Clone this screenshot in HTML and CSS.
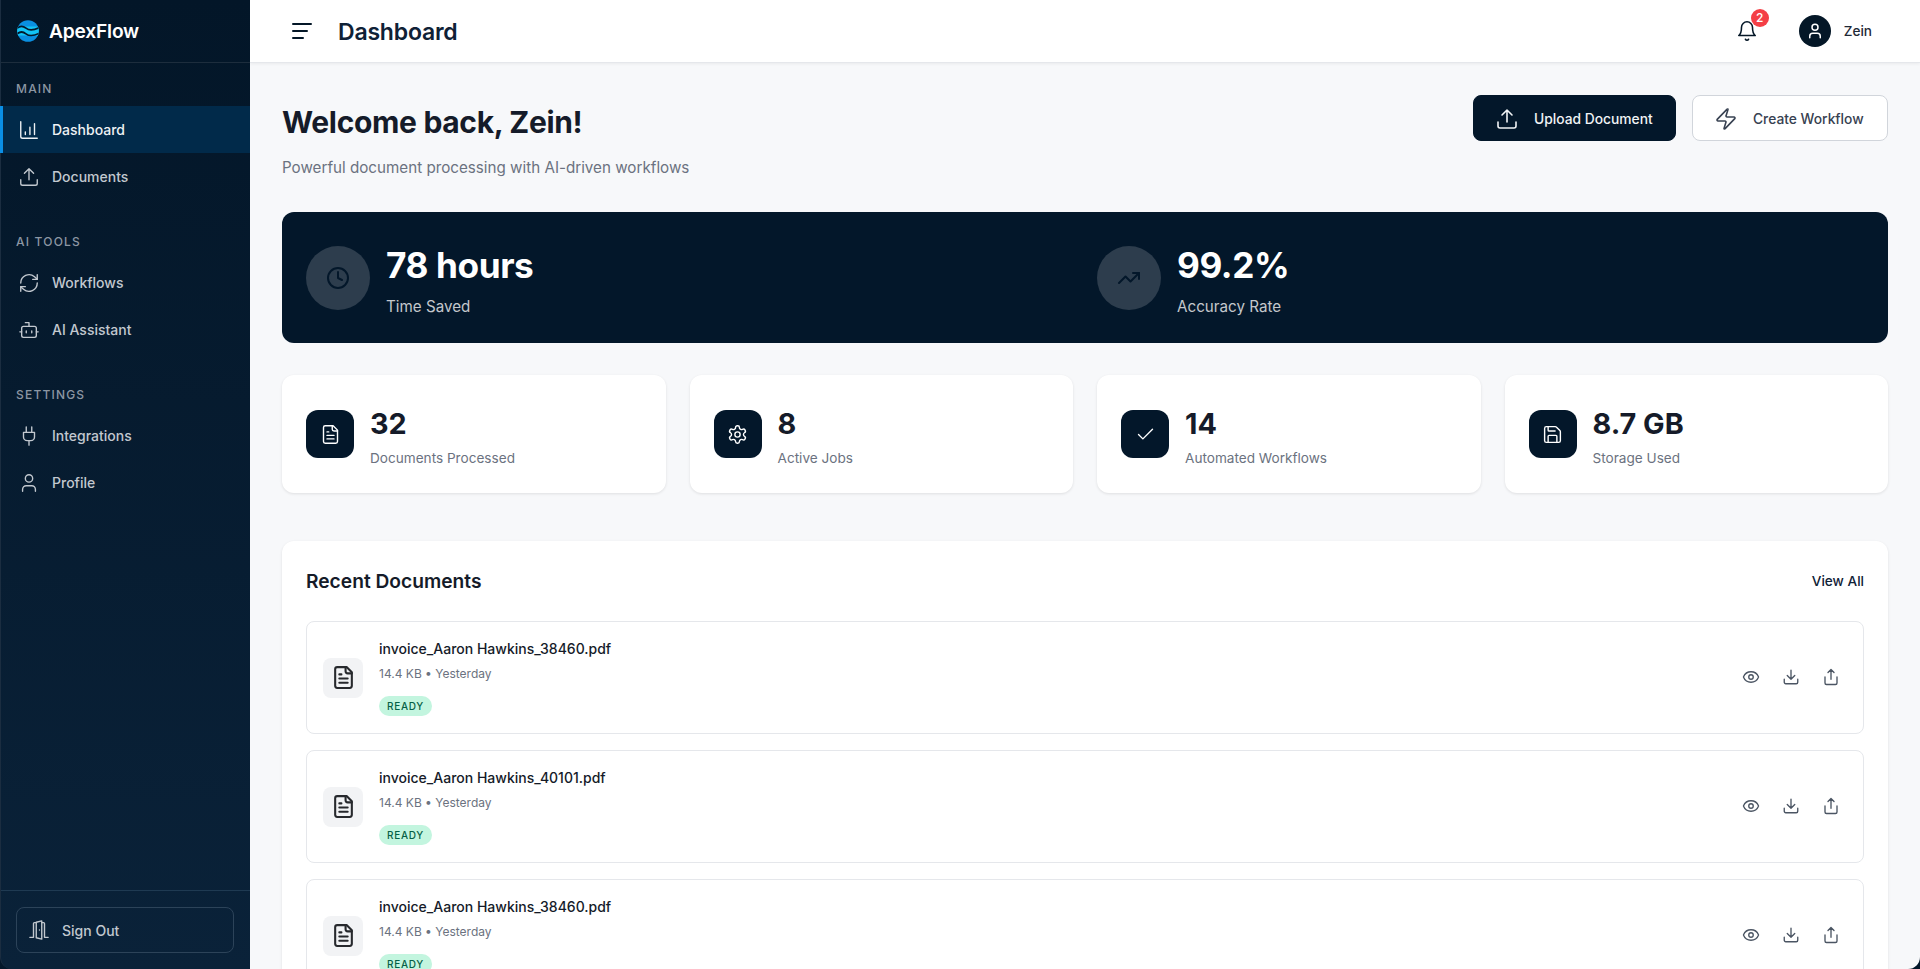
FILE: index.html
```html
<!DOCTYPE html>
<html lang="en">
<head>
<meta charset="utf-8">
<title>ApexFlow Dashboard</title>
<link rel="stylesheet" href="styles.css">
</head>
<body>
<div class="app">
  <aside class="sidebar">
    <div class="brand">
      <svg class="brand-logo" viewBox="0 0 22 22"><defs><clipPath id="lc"><circle cx="11" cy="11" r="10.8"/></clipPath></defs><g clip-path="url(#lc)"><rect width="22" height="22" fill="#0a8fe0"/><rect width="22" height="9" y="6.5" fill="#12c4f5"/><path d="M0 8.2c3-2.4 6-2.4 9 0s7 2.4 13-.4" fill="none" stroke="#03182b" stroke-width="1.7"/><path d="M0 13.8c3-2.4 6-2.4 9 0s7 2.4 13-.4" fill="none" stroke="#03182b" stroke-width="1.7"/></g></svg>
      <span class="brand-name">ApexFlow</span>
    </div>
    <nav class="nav">
      <div class="nav-group">
        <div class="nav-label">MAIN</div>
        <a class="nav-item active"><svg class="nav-icon" viewBox="0 0 24 24"><path d="M3 3v16a2 2 0 0 0 2 2h16"/><path d="M8 17v-3M13 17V9M18 17V5"/></svg>Dashboard</a>
        <a class="nav-item"><svg class="nav-icon" viewBox="0 0 24 24"><path d="M3 15v4a2 2 0 0 0 2 2h14a2 2 0 0 0 2-2v-4"/><path d="M17 8l-5-5-5 5M12 3v12"/></svg>Documents</a>
      </div>
      <div class="nav-group">
        <div class="nav-label">AI TOOLS</div>
        <a class="nav-item"><svg class="nav-icon" viewBox="0 0 24 24"><path d="M3 12a9 9 0 0 1 15-6.7L21 8"/><path d="M21 3v5h-5"/><path d="M21 12a9 9 0 0 1-15 6.7L3 16"/><path d="M8 16H3v5"/></svg>Workflows</a>
        <a class="nav-item"><svg class="nav-icon" viewBox="0 0 24 24"><path d="M12 8V4H8"/><rect x="4" y="8" width="16" height="12" rx="2"/><path d="M2 14h2M20 14h2M15 13v2M9 13v2"/></svg>AI Assistant</a>
      </div>
      <div class="nav-group">
        <div class="nav-label">SETTINGS</div>
        <a class="nav-item"><svg class="nav-icon" viewBox="0 0 24 24"><path d="M12 22v-5M9 8V2M15 8V2"/><path d="M18 8v5a4 4 0 0 1-4 4h-4a4 4 0 0 1-4-4V8z"/></svg>Integrations</a>
        <a class="nav-item"><svg class="nav-icon" viewBox="0 0 24 24"><path d="M19 21v-2a4 4 0 0 0-4-4H9a4 4 0 0 0-4 4v2"/><circle cx="12" cy="7" r="4"/></svg>Profile</a>
      </div>
    </nav>
    <div class="sidebar-foot">
      <button class="signout"><svg class="nav-icon" viewBox="0 0 24 24"><path d="M2 20h3M19 20h3M6 20V5a1 1 0 0 1 1-1h2M18 20V5a1 1 0 0 0-1-1h-2"/><path d="M9 3.5l6-1.5v20l-6-1.5z"/><path d="M12.5 12v.01"/></svg>Sign Out</button>
    </div>
  </aside>
  <div class="main">
    <header class="topbar">
      <div class="topbar-left">
        <svg class="menu-icon" viewBox="0 0 24 24"><path d="M3 5h18M3 12h14M3 19h10"/></svg>
        <h1 class="page-title">Dashboard</h1>
      </div>
      <div class="topbar-right">
        <div class="bell">
          <svg class="bell-icon" viewBox="0 0 24 24"><path d="M6 8a6 6 0 0 1 12 0c0 7 3 9 3 9H3s3-2 3-9"/><path d="M10.3 21a1.94 1.94 0 0 0 3.4 0"/></svg>
          <span class="badge">2</span>
        </div>
        <div class="user">
          <span class="avatar"><svg viewBox="0 0 24 24"><path d="M19 21v-2a4 4 0 0 0-4-4H9a4 4 0 0 0-4 4v2"/><circle cx="12" cy="7" r="4"/></svg></span>
          <span class="user-name">Zein</span>
        </div>
      </div>
    </header>
    <main class="content">
      <section class="welcome">
        <div class="welcome-text">
          <h2 class="welcome-title">Welcome back, Zein!</h2>
          <p class="welcome-sub">Powerful document processing with AI-driven workflows</p>
        </div>
        <div class="actions">
          <button class="btn btn-primary"><svg class="btn-icon" viewBox="0 0 24 24"><path d="M3 15v4a2 2 0 0 0 2 2h14a2 2 0 0 0 2-2v-4"/><path d="M17 8l-5-5-5 5M12 3v12"/></svg>Upload Document</button>
          <button class="btn btn-outline"><svg class="btn-icon" viewBox="0 0 24 24"><path d="M4 14a1 1 0 0 1-.78-1.63l9.9-10.2a.5.5 0 0 1 .86.46l-1.92 6.02A1 1 0 0 0 13 10h7a1 1 0 0 1 .78 1.63l-9.9 10.2a.5.5 0 0 1-.86-.46l1.92-6.02A1 1 0 0 0 11 14z"/></svg>Create Workflow</button>
        </div>
      </section>
      <section class="hero">
        <div class="hero-stat">
          <span class="hero-icon"><svg viewBox="0 0 24 24"><circle cx="12" cy="12" r="10"/><path d="M12 6v6l4 2"/></svg></span>
          <div class="hero-text"><div class="hero-value">78 hours</div><div class="hero-label">Time Saved</div></div>
        </div>
        <div class="hero-stat">
          <span class="hero-icon"><svg viewBox="0 0 24 24"><path d="M22 7l-8.5 8.5-5-5L2 17"/><path d="M16 7h6v6"/></svg></span>
          <div class="hero-text"><div class="hero-value">99.2%</div><div class="hero-label">Accuracy Rate</div></div>
        </div>
      </section>
      <section class="stats">
        <div class="stat">
          <span class="stat-icon"><svg viewBox="0 0 24 24"><path d="M15 2H6a2 2 0 0 0-2 2v16a2 2 0 0 0 2 2h12a2 2 0 0 0 2-2V7z"/><path d="M14 2v4a2 2 0 0 0 2 2h4M10 9H8M16 13H8M16 17H8"/></svg></span>
          <div class="stat-text"><div class="stat-value">32</div><div class="stat-label">Documents Processed</div></div>
        </div>
        <div class="stat">
          <span class="stat-icon"><svg viewBox="0 0 24 24"><path d="M12.22 2h-.44a2 2 0 0 0-2 2v.18a2 2 0 0 1-1 1.73l-.43.25a2 2 0 0 1-2 0l-.15-.08a2 2 0 0 0-2.73.73l-.22.38a2 2 0 0 0 .73 2.73l.15.1a2 2 0 0 1 1 1.72v.51a2 2 0 0 1-1 1.74l-.15.09a2 2 0 0 0-.73 2.73l.22.38a2 2 0 0 0 2.73.73l.15-.08a2 2 0 0 1 2 0l.43.25a2 2 0 0 1 1 1.73V20a2 2 0 0 0 2 2h.44a2 2 0 0 0 2-2v-.18a2 2 0 0 1 1-1.73l.43-.25a2 2 0 0 1 2 0l.15.08a2 2 0 0 0 2.73-.73l.22-.39a2 2 0 0 0-.73-2.73l-.15-.08a2 2 0 0 1-1-1.74v-.5a2 2 0 0 1 1-1.74l.15-.09a2 2 0 0 0 .73-2.73l-.22-.38a2 2 0 0 0-2.73-.73l-.15.08a2 2 0 0 1-2 0l-.43-.25a2 2 0 0 1-1-1.73V4a2 2 0 0 0-2-2z"/><circle cx="12" cy="12" r="3"/></svg></span>
          <div class="stat-text"><div class="stat-value">8</div><div class="stat-label">Active Jobs</div></div>
        </div>
        <div class="stat">
          <span class="stat-icon"><svg viewBox="0 0 24 24"><path d="M20 6L9 17l-5-5"/></svg></span>
          <div class="stat-text"><div class="stat-value">14</div><div class="stat-label">Automated Workflows</div></div>
        </div>
        <div class="stat">
          <span class="stat-icon"><svg viewBox="0 0 24 24"><path d="M15.2 3a2 2 0 0 1 1.4.6l3.8 3.8a2 2 0 0 1 .6 1.4V19a2 2 0 0 1-2 2H5a2 2 0 0 1-2-2V5a2 2 0 0 1 2-2z"/><path d="M17 21v-7a1 1 0 0 0-1-1H8a1 1 0 0 0-1 1v7M7 3v4a1 1 0 0 0 1 1h7"/></svg></span>
          <div class="stat-text"><div class="stat-value">8.7 GB</div><div class="stat-label">Storage Used</div></div>
        </div>
      </section>
      <section class="docs">
        <div class="docs-head">
          <h3 class="docs-title">Recent Documents</h3>
          <a class="view-all">View All</a>
        </div>
        <div class="doc-list">
          <article class="doc">
            <span class="doc-icon"><svg viewBox="0 0 24 24"><path d="M15 2H6a2 2 0 0 0-2 2v16a2 2 0 0 0 2 2h12a2 2 0 0 0 2-2V7z"/><path d="M14 2v4a2 2 0 0 0 2 2h4M10 9H8M16 13H8M16 17H8"/></svg></span>
            <div class="doc-body">
              <div class="doc-name">invoice_Aaron Hawkins_38460.pdf</div>
              <div class="doc-meta">14.4 KB • Yesterday</div>
              <span class="status">READY</span>
            </div>
            <div class="doc-actions">
              <svg class="act" viewBox="0 0 24 24"><path d="M2.06 12.35a1 1 0 0 1 0-.7 10.75 10.75 0 0 1 19.88 0 1 1 0 0 1 0 .7 10.75 10.75 0 0 1-19.88 0"/><circle cx="12" cy="12" r="3"/></svg>
              <svg class="act" viewBox="0 0 24 24"><path d="M21 15v4a2 2 0 0 1-2 2H5a2 2 0 0 1-2-2v-4"/><path d="M7 10l5 5 5-5M12 15V3"/></svg>
              <svg class="act" viewBox="0 0 24 24"><path d="M4 12v8a2 2 0 0 0 2 2h12a2 2 0 0 0 2-2v-8"/><path d="M16 6l-4-4-4 4M12 2v13"/></svg>
            </div>
          </article>
          <article class="doc">
            <span class="doc-icon"><svg viewBox="0 0 24 24"><path d="M15 2H6a2 2 0 0 0-2 2v16a2 2 0 0 0 2 2h12a2 2 0 0 0 2-2V7z"/><path d="M14 2v4a2 2 0 0 0 2 2h4M10 9H8M16 13H8M16 17H8"/></svg></span>
            <div class="doc-body">
              <div class="doc-name">invoice_Aaron Hawkins_40101.pdf</div>
              <div class="doc-meta">14.4 KB • Yesterday</div>
              <span class="status">READY</span>
            </div>
            <div class="doc-actions">
              <svg class="act" viewBox="0 0 24 24"><path d="M2.06 12.35a1 1 0 0 1 0-.7 10.75 10.75 0 0 1 19.88 0 1 1 0 0 1 0 .7 10.75 10.75 0 0 1-19.88 0"/><circle cx="12" cy="12" r="3"/></svg>
              <svg class="act" viewBox="0 0 24 24"><path d="M21 15v4a2 2 0 0 1-2 2H5a2 2 0 0 1-2-2v-4"/><path d="M7 10l5 5 5-5M12 15V3"/></svg>
              <svg class="act" viewBox="0 0 24 24"><path d="M4 12v8a2 2 0 0 0 2 2h12a2 2 0 0 0 2-2v-8"/><path d="M16 6l-4-4-4 4M12 2v13"/></svg>
            </div>
          </article>
          <article class="doc">
            <span class="doc-icon"><svg viewBox="0 0 24 24"><path d="M15 2H6a2 2 0 0 0-2 2v16a2 2 0 0 0 2 2h12a2 2 0 0 0 2-2V7z"/><path d="M14 2v4a2 2 0 0 0 2 2h4M10 9H8M16 13H8M16 17H8"/></svg></span>
            <div class="doc-body">
              <div class="doc-name">invoice_Aaron Hawkins_38460.pdf</div>
              <div class="doc-meta">14.4 KB • Yesterday</div>
              <span class="status">READY</span>
            </div>
            <div class="doc-actions">
              <svg class="act" viewBox="0 0 24 24"><path d="M2.06 12.35a1 1 0 0 1 0-.7 10.75 10.75 0 0 1 19.88 0 1 1 0 0 1 0 .7 10.75 10.75 0 0 1-19.88 0"/><circle cx="12" cy="12" r="3"/></svg>
              <svg class="act" viewBox="0 0 24 24"><path d="M21 15v4a2 2 0 0 1-2 2H5a2 2 0 0 1-2-2v-4"/><path d="M7 10l5 5 5-5M12 15V3"/></svg>
              <svg class="act" viewBox="0 0 24 24"><path d="M4 12v8a2 2 0 0 0 2 2h12a2 2 0 0 0 2-2v-8"/><path d="M16 6l-4-4-4 4M12 2v13"/></svg>
            </div>
          </article>
        </div>
      </section>
    </main>
  </div>
</div>
</body>
</html>
```
FILE: styles.css
```css
* { box-sizing: border-box; }
html, body { margin: 0; height: 100%; overflow: hidden; }
body { font-family: Inter, "Liberation Sans", sans-serif; color: #111827; background: #03172a; }
svg { fill: none; stroke: currentColor; stroke-width: 2; stroke-linecap: round; stroke-linejoin: round; flex: none; display: block; }
h1, h2, h3, p { margin: 0; }
button { font-family: inherit; cursor: pointer; }

.app { display: flex; height: 969px; overflow: hidden; }

.sidebar { width: 250px; flex: none; display: flex; flex-direction: column; background: linear-gradient(180deg, #031628 0%, #0a2239 100%); border-left: 1px solid #1b2d40; border-bottom-left-radius: 12px; color: #fff; }
.brand { height: 63px; flex: none; display: flex; align-items: center; gap: 10px; padding-left: 16px; border-bottom: 1px solid #1d2d3d; }
.brand-logo { width: 22px; height: 22px; stroke: none; }
.brand-name { font-size: 19.2px; font-weight: 600; letter-spacing: -0.2px; }
.nav { flex: 1; display: flex; flex-direction: column; gap: 32px; padding-top: 16px; }
.nav-label { padding: 1px 15px 0; height: 27px; font-size: 12px; font-weight: 500; line-height: 18px; letter-spacing: 1.2px; color: #8c96a3; }
.nav-item { height: 47px; display: flex; align-items: center; gap: 12px; padding-left: 17px; font-size: 14px; font-weight: 500; color: #c2c8cf; }
.nav-item.active { background: #012a4a; border-left: 3px solid #0a8fe6; margin-left: -1px; padding-left: 15px; color: #eef1f4; }
.nav-icon { width: 22px; height: 22px; stroke-width: 1.5; }
.sidebar-foot { padding: 16px 15px; border-top: 1px solid #1f3a52; }
.signout { width: 218px; height: 46px; display: flex; align-items: center; gap: 12px; padding: 0 11px; background: transparent; border: 1px solid #2c4359; border-radius: 8px; color: #c2c8cf; font-size: 14px; font-weight: 500; }

.main { flex: 1; min-width: 0; display: flex; flex-direction: column; background: #f7f8fa; border-bottom-right-radius: 12px; overflow: hidden; }
.topbar { height: 63px; flex: none; display: flex; align-items: center; justify-content: space-between; padding: 0 32px; background: #fff; border-bottom: 1px solid #e5e7eb; box-shadow: 0 1px 3px rgba(0, 0, 0, .06); }
.topbar-left { display: flex; align-items: center; gap: 24px; padding-left: 8px; }
.menu-icon { width: 24px; height: 24px; color: #041727; }
.page-title { padding-top: 2px; font-size: 23px; font-weight: 600; color: #0f2136; line-height: 32px; letter-spacing: -0.2px; }
.topbar-right { display: flex; align-items: center; gap: 41px; padding-right: 16px; }
.bell { position: relative; color: #041727; }
.bell-icon { width: 22px; height: 22px; stroke-width: 1.7; }
.badge { position: absolute; top: -11px; left: 15px; width: 18px; height: 18px; border-radius: 50%; background: #f43f46; color: #fff; font-size: 12px; font-weight: 500; line-height: 18px; text-align: center; }
.user { display: flex; align-items: center; gap: 13px; }
.avatar { width: 32px; height: 32px; border-radius: 50%; background: #041727; color: #fff; display: flex; align-items: center; justify-content: center; }
.avatar svg { width: 18px; height: 18px; }
.user-name { font-size: 13.6px; font-weight: 500; color: #1f2937; }

.content { flex: 1; padding: 32px 32px 0; display: flex; flex-direction: column; }
.welcome { display: flex; justify-content: space-between; align-items: flex-start; height: 117px; }
.welcome-text { padding-top: 3px; }
.welcome-title { font-size: 30px; font-weight: 700; line-height: 48px; color: #151b29; letter-spacing: -0.33px; }
.welcome-sub { margin-top: 10px; font-size: 15.2px; line-height: 24px; color: #6b7280; }
.actions { display: flex; gap: 16px; }
.btn { height: 46px; display: flex; align-items: center; gap: 15px; border-radius: 8px; font-size: 13.8px; font-weight: 500; padding: 1px 21px 0; white-space: nowrap; }
.btn-icon { width: 24px; height: 24px; stroke-width: 1.6; }
.btn-primary { background: #03172a; border: 1px solid #03172a; color: #f1f3f5; width: 203px; }
.btn-outline { background: #fff; border: 1px solid #d1d5db; color: #374151; width: 196px; }

.hero { height: 131px; flex: none; display: grid; grid-template-columns: 1fr 1fr; gap: 24px; align-items: center; padding: 0 24px; border-radius: 12px; background: #03172a; }
.hero-stat { display: flex; align-items: center; gap: 16px; }
.hero-icon { width: 64px; height: 64px; flex: none; border-radius: 50%; background: #2d3d4d; color: #03172a; display: flex; align-items: center; justify-content: center; }
.hero-icon svg { width: 24px; height: 24px; }
.hero-text { padding-top: 6px; }
.hero-value { font-size: 35.2px; font-weight: 700; line-height: 44px; color: #fff; letter-spacing: -0.4px; }
.hero-label { margin-top: 8px; font-size: 15.2px; line-height: 24px; color: #c3c7cc; }

.stats { margin-top: 32px; display: grid; grid-template-columns: repeat(4, 1fr); gap: 24px; flex: none; }
.stat { height: 118px; display: flex; align-items: center; gap: 16px; padding: 0 24px; background: #fff; border-radius: 12px; box-shadow: 0 1px 3px rgba(0, 0, 0, .1); }
.stat-icon { width: 48px; height: 48px; flex: none; border-radius: 12px; background: #03172a; color: #fff; display: flex; align-items: center; justify-content: center; }
.stat-icon svg { width: 21px; height: 21px; stroke-width: 1.6; }
.stat-text { padding-top: 5px; }
.stat-value { font-size: 28.8px; font-weight: 700; line-height: 38px; color: #151b29; }
.stat-label { margin-top: 5px; font-size: 13.6px; line-height: 20px; color: #6b7280; }

.docs { margin-top: 48px; background: #fff; border-radius: 12px; box-shadow: 0 1px 3px rgba(0, 0, 0, .1); padding: 24px; flex: none; }
.docs-head { display: flex; justify-content: space-between; align-items: center; height: 32px; margin-bottom: 24px; }
.docs-title { font-size: 19.2px; font-weight: 600; color: #151b29; line-height: 32px; }
.view-all { font-size: 13.6px; font-weight: 500; color: #0f2136; }
.doc-list { display: flex; flex-direction: column; gap: 16px; }
.doc { height: 113px; flex: none; display: flex; align-items: center; gap: 16px; padding: 0 16px; border: 1px solid #e5e7eb; border-radius: 8px; background: #fff; }
.doc-icon { width: 40px; height: 40px; flex: none; border-radius: 8px; background: #f2f3f5; color: #27292d; display: flex; align-items: center; justify-content: center; }
.doc-icon svg { width: 25px; height: 25px; }
.doc-body { flex: 1; min-width: 0; display: flex; flex-direction: column; align-items: flex-start; }
.doc-name { font-size: 14px; font-weight: 500; line-height: 20px; color: #151b29; }
.doc-meta { margin-top: 6px; font-size: 12px; line-height: 18px; color: #6b7280; }
.status { margin-top: 13px; height: 20px; display: inline-flex; align-items: center; padding: 0 8px; border-radius: 10px; background: #c3f5df; color: #065f46; font-size: 10px; font-weight: 500; letter-spacing: .7px; }
.doc-actions { display: flex; gap: 22px; padding: 0 7px 2px 0; color: #4b5563; }
.act { width: 18px; height: 18px; stroke-width: 1.8; }
```
